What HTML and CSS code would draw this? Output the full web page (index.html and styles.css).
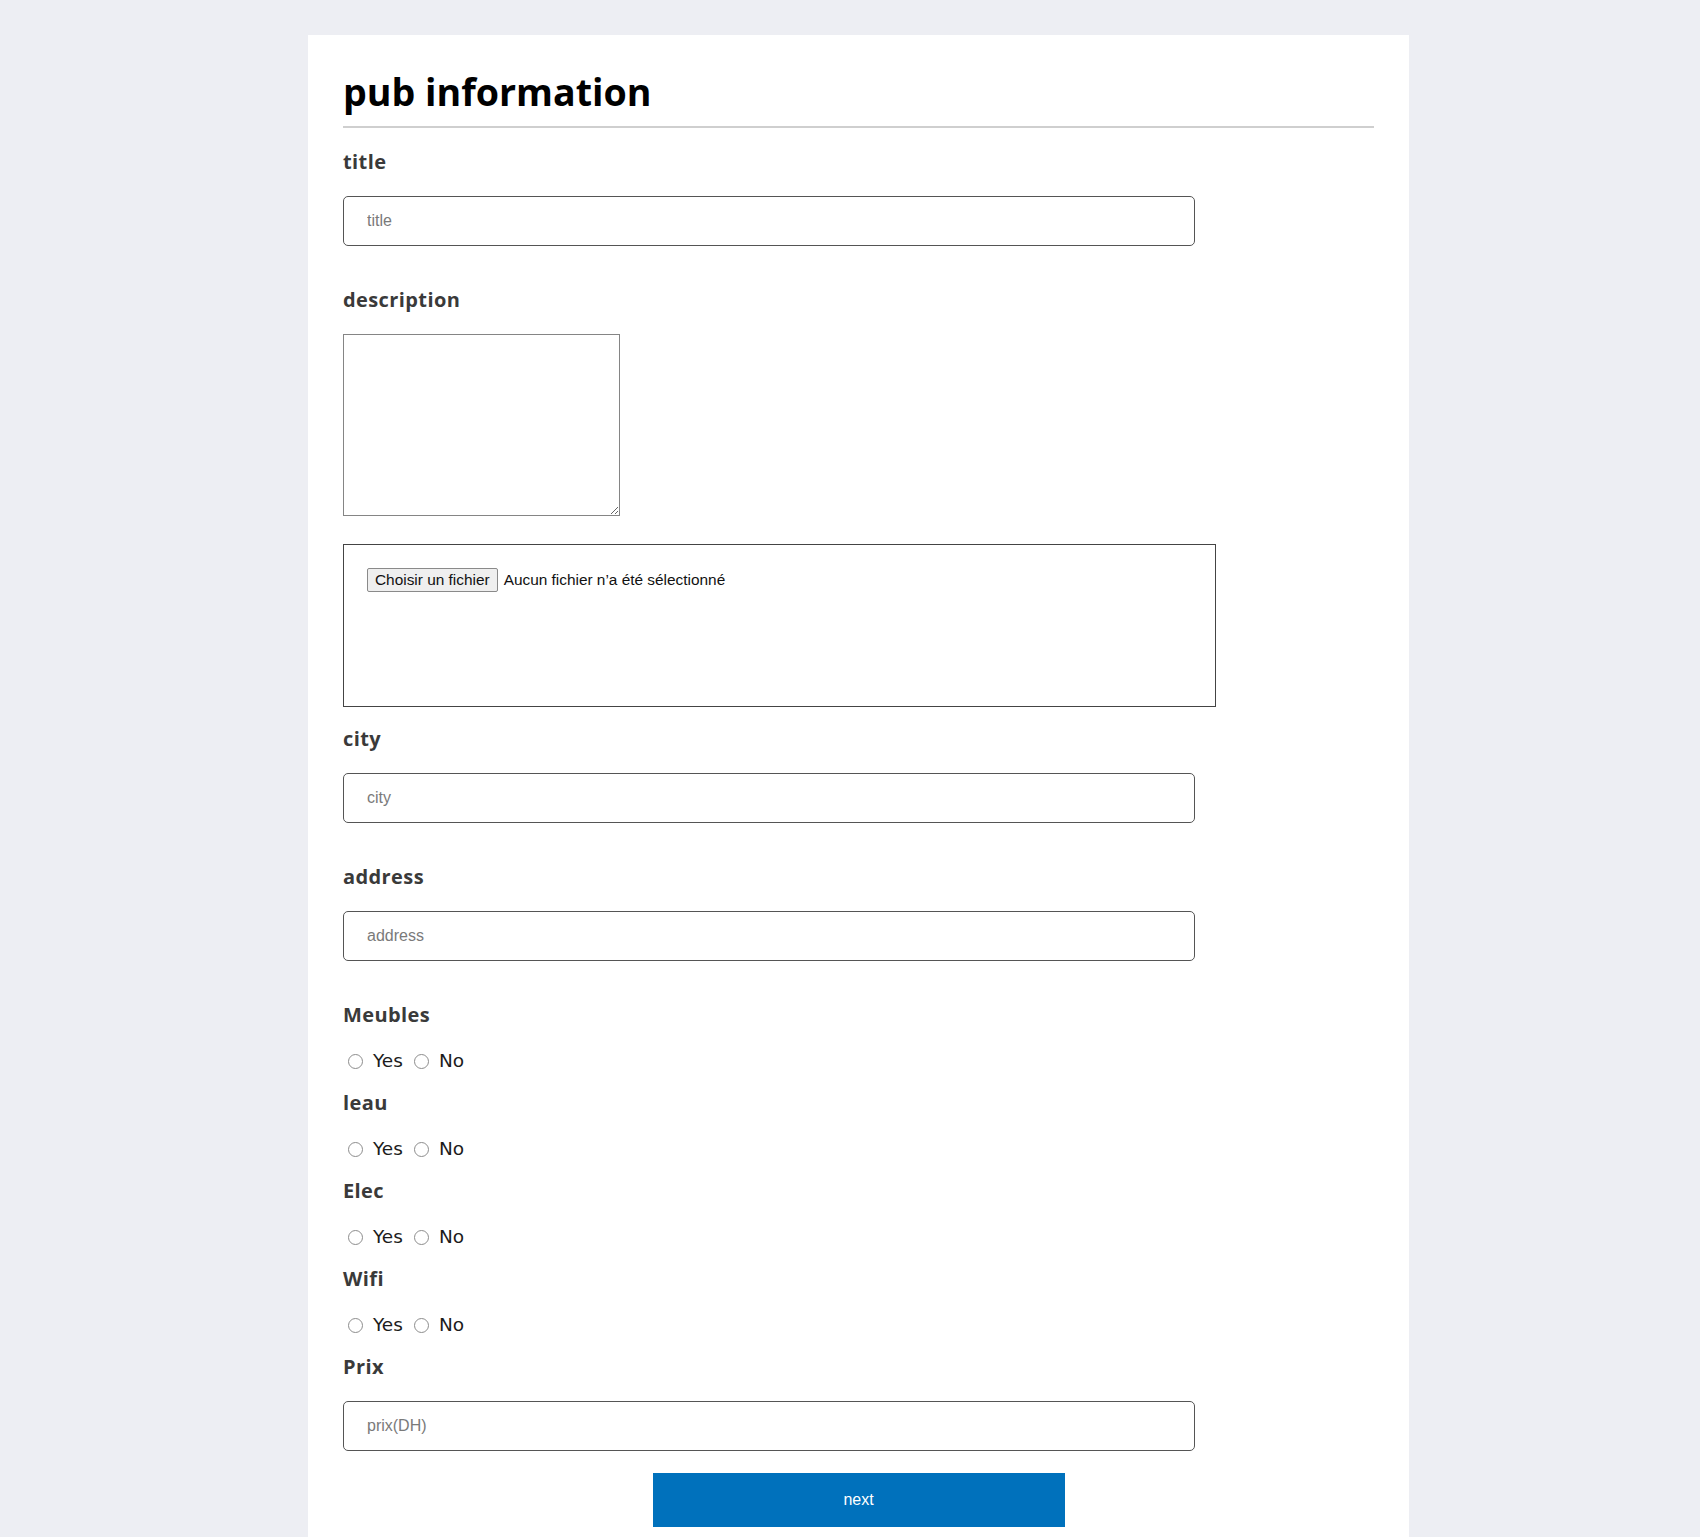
FILE: index.html
```html
<!DOCTYPE html>
<html lang="fr">
<head>
<meta charset="utf-8">
<title>pub information</title>
<link rel="stylesheet" href="styles.css">
</head>
<body>
<main class="page">
  <section class="card">
    <h1 class="card-title">pub information</h1>
    <form class="form" onsubmit="return false">
      <label class="field-label" for="title">title</label>
      <input class="text-input" id="title" type="text" placeholder="title">

      <label class="field-label" for="description">description</label>
      <textarea class="desc-input" id="description"></textarea>

      <div class="file-box">
        <button type="button" class="file-btn">Choisir un fichier</button>
        <span class="file-status">Aucun fichier n’a été sélectionné</span>
      </div>

      <label class="field-label" for="city">city</label>
      <input class="text-input" id="city" type="text" placeholder="city">

      <label class="field-label" for="address">address</label>
      <input class="text-input" id="address" type="text" placeholder="address">

      <p class="field-label">Meubles</p>
      <div class="radio-row">
        <label class="choice"><input class="choice-input" type="radio" name="meubles"><span>Yes</span></label>
        <label class="choice"><input class="choice-input" type="radio" name="meubles"><span>No</span></label>
      </div>

      <p class="field-label">leau</p>
      <div class="radio-row">
        <label class="choice"><input class="choice-input" type="radio" name="leau"><span>Yes</span></label>
        <label class="choice"><input class="choice-input" type="radio" name="leau"><span>No</span></label>
      </div>

      <p class="field-label">Elec</p>
      <div class="radio-row">
        <label class="choice"><input class="choice-input" type="radio" name="elec"><span>Yes</span></label>
        <label class="choice"><input class="choice-input" type="radio" name="elec"><span>No</span></label>
      </div>

      <p class="field-label">Wifi</p>
      <div class="radio-row">
        <label class="choice"><input class="choice-input" type="radio" name="wifi"><span>Yes</span></label>
        <label class="choice"><input class="choice-input" type="radio" name="wifi"><span>No</span></label>
      </div>

      <label class="field-label" for="prix">Prix</label>
      <input class="text-input text-input--last" id="prix" type="text" placeholder="prix(DH)">

      <div class="actions">
        <button type="submit" class="next-btn">next</button>
      </div>
    </form>
  </section>
</main>
</body>
</html>
```

FILE: styles.css
```css
* {
  box-sizing: border-box;
}

html,
body {
  margin: 0;
  padding: 0;
  background: #edeef3;
}

body {
  font-family: "Open Sans", "DejaVu Sans", sans-serif;
  color: #222;
}

.page {
  padding: 35px 0 0 308px;
}

.card {
  width: 1101px;
  background: #ffffff;
  padding: 35px 35px 10px 35px;
}

.card-title {
  margin: 0 0 22px;
  padding-bottom: 12px;
  font-family: "Open Sans", sans-serif;
  font-weight: 700;
  font-size: 37.6px;
  line-height: 44px;
  color: #000;
  border-bottom: 2px solid #cfcfcf;
}

.form {
  display: flex;
  flex-direction: column;
  align-items: flex-start;
}

.field-label {
  display: block;
  margin: 0 0 22px;
  font-family: "Open Sans", sans-serif;
  font-weight: 700;
  font-size: 20px;
  line-height: 24px;
  letter-spacing: 0.4px;
  color: #3a3a3a;
}

.text-input {
  display: block;
  width: 852px;
  height: 50px;
  margin: 0 0 42px;
  padding: 0 23px;
  border: 1px solid #555555;
  border-radius: 5px;
  background: #fff;
  font-family: "Liberation Sans", Arial, sans-serif;
  font-size: 16px;
  color: #222;
  outline: none;
}

.text-input::placeholder {
  color: #7a7a7a;
}

.text-input--last {
  margin-bottom: 22px;
}

.desc-input {
  display: block;
  width: 277px;
  height: 182px;
  margin: 0;
  padding: 2px;
  border: 1px solid #858585;
  border-radius: 0;
  background: #fff;
  font-family: "Liberation Mono", monospace;
  font-size: 14px;
}

.file-box {
  display: flex;
  align-items: flex-start;
  gap: 6px;
  width: 873px;
  height: 163px;
  margin: 28px 0 20px;
  padding: 23px 0 0 23px;
  border: 1px solid #444444;
}

.file-btn {
  height: 24px;
  padding: 0 7px;
  border: 1px solid #8a8a8a;
  border-radius: 2px;
  background: #efefef;
  font-family: "Liberation Sans", Arial, sans-serif;
  font-size: 15.4px;
  color: #111;
}

.file-status {
  font-family: "Liberation Sans", Arial, sans-serif;
  font-size: 15.4px;
  line-height: 24px;
  color: #111;
}

.radio-row {
  display: flex;
  align-items: center;
  gap: 6px;
  height: 24px;
  margin: 0 0 18px;
}

.choice {
  display: inline-flex;
  align-items: center;
  gap: 10px;
  font-family: "DejaVu Sans", sans-serif;
  font-size: 18.5px;
  line-height: 24px;
  color: #1c1c1c;
}

.choice-input {
  appearance: none;
  -webkit-appearance: none;
  width: 15px;
  height: 15px;
  margin: 0 0 0 5px;
  border: 1px solid #8d8d8d;
  border-radius: 50%;
  background: #fff;
}

.actions {
  align-self: stretch;
  display: flex;
  justify-content: center;
}

.next-btn {
  width: 412px;
  height: 54px;
  border: none;
  background: #0071bc;
  color: #fff;
  font-family: "Liberation Sans", Arial, sans-serif;
  font-size: 16px;
}
```
